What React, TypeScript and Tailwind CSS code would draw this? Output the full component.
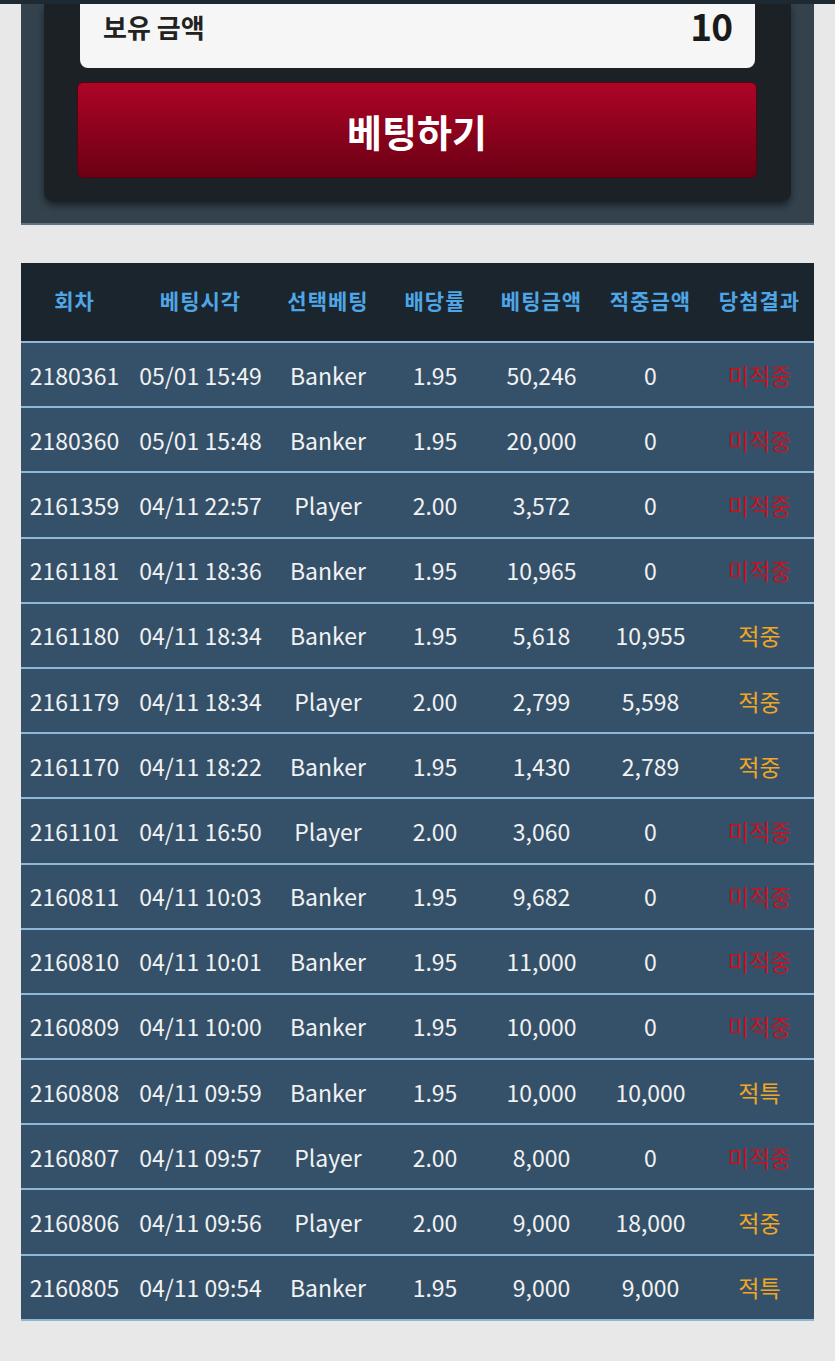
import React from "react";

type Row = [string, string, string, string, string, string, string];

const rows: Row[] = [
  ["2180361", "05/01 15:49", "Banker", "1.95", "50,246", "0", "미적중"],
  ["2180360", "05/01 15:48", "Banker", "1.95", "20,000", "0", "미적중"],
  ["2161359", "04/11 22:57", "Player", "2.00", "3,572", "0", "미적중"],
  ["2161181", "04/11 18:36", "Banker", "1.95", "10,965", "0", "미적중"],
  ["2161180", "04/11 18:34", "Banker", "1.95", "5,618", "10,955", "적중"],
  ["2161179", "04/11 18:34", "Player", "2.00", "2,799", "5,598", "적중"],
  ["2161170", "04/11 18:22", "Banker", "1.95", "1,430", "2,789", "적중"],
  ["2161101", "04/11 16:50", "Player", "2.00", "3,060", "0", "미적중"],
  ["2160811", "04/11 10:03", "Banker", "1.95", "9,682", "0", "미적중"],
  ["2160810", "04/11 10:01", "Banker", "1.95", "11,000", "0", "미적중"],
  ["2160809", "04/11 10:00", "Banker", "1.95", "10,000", "0", "미적중"],
  ["2160808", "04/11 09:59", "Banker", "1.95", "10,000", "10,000", "적특"],
  ["2160807", "04/11 09:57", "Player", "2.00", "8,000", "0", "미적중"],
  ["2160806", "04/11 09:56", "Player", "2.00", "9,000", "18,000", "적중"],
  ["2160805", "04/11 09:54", "Banker", "1.95", "9,000", "9,000", "적특"],
];

const headers = ["회차", "베팅시각", "선택베팅", "배당률", "베팅금액", "적중금액", "당첨결과"];
const widths = ["w-[107px]", "w-[145px]", "w-[110px]", "w-[104px]", "w-[109px]", "w-[109px]", "w-[109px]"];

export default function App() {
  return (
    <div
      className="min-h-[1361px] w-[835px] bg-[#e8e8e8]"
      style={{ fontFamily: '"Noto Sans CJK KR", "Noto Sans", sans-serif' }}
    >
      <div className="h-[4px] w-full bg-[#1e2a33]" />
      <div className="mx-[21px] border-b-2 border-[#5d7486] bg-[#33424d] pb-[21px]">
        <div className="mx-[23px] rounded-b-[10px] bg-[#1c2125] px-[36px] pb-[24px] shadow-[0_4px_6px_rgba(0,0,0,0.45)]">
          <div className="flex h-[64px] items-start justify-between rounded-b-[8px] bg-[#f6f6f6] px-[23px] pt-[1px]">
            <span className="text-[26px] font-bold leading-[44px] text-[#222]">보유 금액</span>
            <span className="text-[37px] font-bold leading-[40px] tracking-[-1px] text-[#1a1a1a]">10</span>
          </div>
          <button className="mx-[-3px] mt-[14px] flex h-[96px] w-[680px] items-center justify-center rounded-[6px] border border-[#5a0010] bg-gradient-to-b from-[#ae0527] to-[#6c0014] text-[38px] font-bold text-white">
            베팅하기
          </button>
        </div>
      </div>

      <div className="mx-[21px] mt-[38px]">
        <div className="flex h-[80px] items-center border-b-2 border-[#8fb8d6] bg-[#1b252d]">
          {headers.map((h, i) => (
            <div
              key={h}
              className={`${widths[i]} shrink-0 pb-[2px] text-center text-[21px] font-bold tracking-[1px] text-[#4ea6e6]`}
            >
              {h}
            </div>
          ))}
        </div>
        {rows.map((r) => (
          <div key={r[0]} className="flex h-[65.2px] items-center border-b-2 border-[#8fb8d6] bg-[#35516a]">
            {r.map((c, i) => {
              let color = "text-[#f2f2f2]";
              if (i === 6) color = c === "미적중" ? "text-[#c5121f]" : "text-[#f2a623]";
              return (
                <div
                  key={i}
                  className={`${widths[i]} shrink-0 text-center text-[23px] leading-[30px] ${color}`}
                >
                  {c}
                </div>
              );
            })}
          </div>
        ))}
      </div>
    </div>
  );
}
